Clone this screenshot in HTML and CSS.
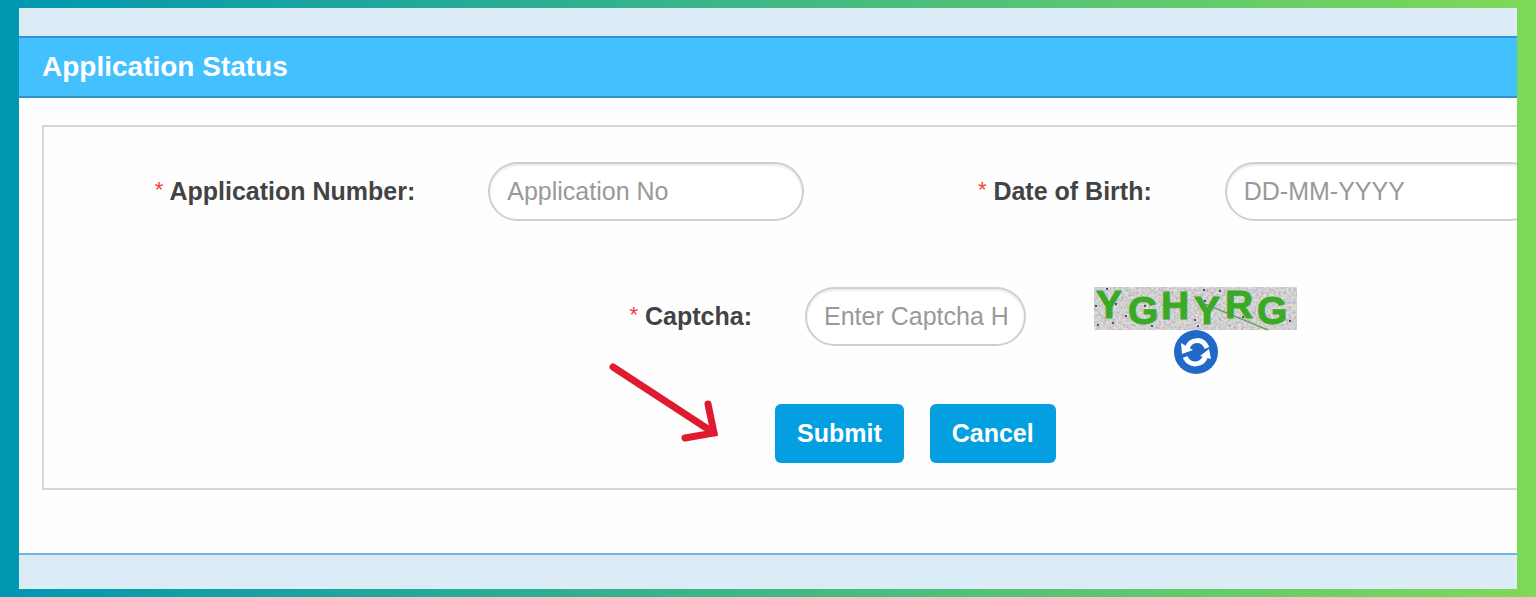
FILE: index.html
```
<!DOCTYPE html>
<html lang="en">
<head>
  <meta charset="UTF-8" />
  <meta name="viewport" content="width=device-width, initial-scale=1.0"/>
  <title>Application Status</title>
  <link rel="stylesheet" href="styles.css">
</head>
<body>
  <main class="panel">
    <div class="strip strip-top"></div>
    <h1>Application Status</h1>

    <div class="panel-body">
      <form class="status-form" id="statusForm">
        <div class="row row-details">
          <label for="appNo"><span class="required">*</span> Application Number:</label>
          <input type="text" id="appNo" placeholder="Application No">
          <label for="dob"><span class="required">*</span> Date of Birth:</label>
          <input type="text" id="dob" placeholder="DD-MM-YYYY">
        </div>

        <div class="row row-captcha">
          <label for="captcha"><span class="required">*</span> Captcha:</label>
          <input type="text" id="captcha" placeholder="Enter Captcha Here">
          <div class="captcha">
            <svg class="captcha-image" viewBox="0 0 203 43" role="img" aria-label="Captcha code">
              <filter id="noise" x="0" y="0" width="100%" height="100%">
                <feTurbulence type="fractalNoise" baseFrequency="0.4" numOctaves="2" seed="4"/>
                <feColorMatrix values="0.8 0 0 0 0.24  0 0.8 0 0 0.22  0 0 0.8 0 0.23  0 0 0 0 1"/>
              </filter>
              <rect width="203" height="43" filter="url(#noise)"/>
              <g class="captcha-text">
                <text x="2" y="31">Y</text>
                <text x="34" y="37">G</text>
                <text x="67" y="32">H</text>
                <text x="100" y="37">Y</text>
                <text x="131" y="31">R</text>
                <text x="163" y="37">G</text>
              </g>
              <path d="M111 17L174 43" stroke="#4d9a3f" stroke-width="1.3"/>
              <g fill="#26264a">
                <circle cx="13" cy="2" r="1"/><circle cx="22" cy="17" r="1"/><circle cx="4" cy="38" r="1"/>
                <circle cx="19" cy="36" r="1"/><circle cx="32" cy="29" r="1"/><circle cx="51" cy="19" r="1"/>
                <circle cx="58" cy="39" r="1"/><circle cx="101" cy="33" r="1"/><circle cx="110" cy="3" r="1"/>
                <circle cx="111" cy="14" r="1"/><circle cx="126" cy="4" r="1"/><circle cx="149" cy="30" r="1"/>
                <circle cx="104" cy="39" r="1"/><circle cx="196" cy="34" r="1"/><circle cx="2" cy="19" r="1"/>
              </g>
            </svg>
            <button type="button" class="refresh" aria-label="Refresh captcha">
              <svg viewBox="0 0 44 44">
                <circle cx="22" cy="22" r="22" fill="#2268c8"/>
                <g fill="none" stroke="#fff" stroke-width="5">
                  <path d="M13 19C16 8 29 8 33 18"/>
                  <path d="M32 25C29 36 16 37 11 27"/>
                </g>
                <path d="M7 13L8 24L19 20Z" fill="#fff"/>
                <path d="M35 19L37 29L26 26Z" fill="#fff"/>
              </svg>
            </button>
          </div>
        </div>

        <div class="row row-actions">
          <div class="actions">
            <svg class="arrow" viewBox="0 0 112 84" aria-hidden="true">
              <path d="M5 6L106 72M100 43L106 72L77 77" fill="none" stroke="#df1b32" stroke-width="7" stroke-linecap="round" stroke-linejoin="miter"/>
            </svg>
            <button type="submit" class="btn">Submit</button>
            <button type="reset" class="btn">Cancel</button>
          </div>
        </div>
      </form>
    </div>

    <div class="strip strip-bottom"></div>
  </main>
</body>
</html>
```
FILE: styles.css
```
:root {
  --header: #43c1ff;
  --line: #2f94d0;
  --strip: #dbecf6;
  --border: #d6d6d6;
  --button: #039fe0;
  --text: #434343;
}

* {
  box-sizing: border-box;
  margin: 0;
  padding: 0;
  font-family: "Liberation Sans", Arial, sans-serif;
}

body {
  background: linear-gradient(to right, #0097b2, #7ed957);
  color: var(--text);
  min-height: 100vh;
  padding: 8px 19px;
  font-size: 25px;
}

.panel {
  background: #fefefe;
  overflow: hidden;
}

.strip {
  background: var(--strip);
}

.strip-top {
  height: 28px;
}

.strip-bottom {
  height: 36px;
  border-top: 2px solid #74b3dc;
}

h1 {
  background: var(--header);
  border-top: 2px solid var(--line);
  border-bottom: 2px solid var(--line);
  color: #fff;
  font-size: 28px;
  line-height: 58px;
  padding: 0 23px;
}

/* the form is a little wider than the panel and runs off its right edge */
.panel-body {
  padding: 27px 0 63px 23px;
  margin-right: -25px;
}

.status-form {
  border: 2px solid var(--border);
  padding: 35px 0 25px;
}

.row {
  display: grid;
}

.row-details {
  grid-template-columns: 371fr 315fr 275fr 315fr;
  column-gap: 73px;
}

.row-captcha {
  grid-template-columns: 708fr 221fr 461fr;
  column-gap: 53px;
  margin-top: 66px;
}

.row-actions {
  grid-template-columns: 731fr 765fr;
  margin-top: 30px;
}

label {
  font-weight: 700;
  line-height: 58px;
  text-align: right;
  white-space: nowrap;
}

.required {
  color: #ef4136;
  font-size: 22px;
  font-weight: 400;
  line-height: 1;
  vertical-align: 3px;
}

input {
  width: 100%;
  min-width: 0;
  height: 59px;
  padding: 0 17px;
  background: #fff;
  border: 2px solid #cfcfcf;
  border-radius: 30px;
  box-shadow: inset 0 2px 2px rgba(0, 0, 0, 0.08);
  color: var(--text);
  font-size: 25px;
}

input::placeholder {
  color: #999;
}

.captcha {
  display: flex;
  flex-direction: column;
  align-items: center;
  width: 203px;
  margin-left: 15px;
}

.captcha-image {
  display: block;
  width: 203px;
  height: 43px;
  overflow: visible;
}

.captcha-text {
  fill: #3aaa26;
  stroke: #3aaa26;
  stroke-width: 1;
  font-size: 39px;
  font-weight: 700;
}

.refresh {
  width: 44px;
  height: 44px;
  background: none;
  border: none;
  border-radius: 50%;
  cursor: pointer;
}

.refresh svg {
  display: block;
}

.actions {
  grid-column: 2;
  justify-self: start;
  display: flex;
  gap: 26px;
  position: relative;
}

.btn {
  height: 59px;
  padding: 0 22px;
  background: var(--button);
  color: #fff;
  border: none;
  border-radius: 6px;
  font-size: 25px;
  font-weight: 700;
  cursor: pointer;
}

.btn:hover {
  opacity: 0.9;
}

/* pointer towards the submit button */
.arrow {
  position: absolute;
  right: 100%;
  bottom: 18px;
  width: 112px;
  height: 84px;
  margin-right: 55px;
}
```
